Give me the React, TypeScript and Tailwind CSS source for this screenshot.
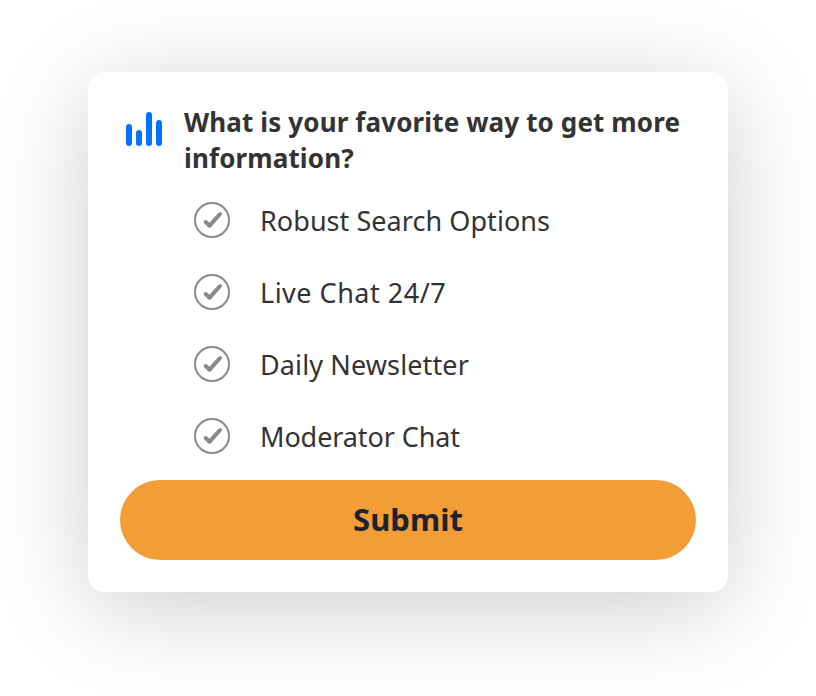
const options = [
  { label: "Robust Search Options", tracking: "tracking-[0.05px]" },
  { label: "Live Chat 24/7", tracking: "tracking-[0.5px]" },
  { label: "Daily Newsletter", tracking: "tracking-[0.12px]" },
  { label: "Moderator Chat", tracking: "tracking-[-0.1px]" },
];

function Check() {
  return (
    <svg className="h-9 w-9 shrink-0" viewBox="0 0 36 36" fill="none">
      <circle cx="18" cy="18" r="17" stroke="#888" strokeWidth="2" />
      <path d="M11.8 20L15.6 23.7L26 12" stroke="#888" strokeWidth="4" strokeLinecap="round" strokeLinejoin="round" />
    </svg>
  );
}

export default function App() {
  return (
    <main className="flex h-[696px] w-[816px] overflow-hidden bg-white px-[88px] pt-[72px] font-['Noto_Sans',sans-serif] text-[#333]">
      <section className="flex h-[520px] w-[640px] flex-col rounded-2xl bg-white px-8 pt-8 shadow-[0_16px_100px_rgba(0,0,0,0.2)]">
        <div className="flex h-[80px]">
          <svg className="ml-1.5 mt-2 h-[34px] w-9 shrink-0" viewBox="0 0 36 34" fill="#0073ff">
            <rect y="12" width="6" height="22" rx="3" />
            <rect x="10" y="18" width="6" height="16" rx="3" />
            <rect x="20" width="6" height="34" rx="3" />
            <rect x="30" y="8" width="6" height="26" rx="3" />
          </svg>
          <h1 className="ml-[22px] text-[26px] leading-9 font-bold tracking-[0.13px]">
            <span className="block whitespace-nowrap">What is your favorite way to get more</span>
            <span className="block whitespace-nowrap">information?</span>
          </h1>
        </div>
        <ul className="h-[288px]">
          {options.map(({ label, tracking }) => (
            <li key={label} className="flex h-[72px] items-center gap-[30px] pl-[74px]">
              <Check />
              <span className={`pt-0.5 text-[27px] leading-9 whitespace-nowrap ${tracking}`}>{label}</span>
            </li>
          ))}
        </ul>
        <button className="mt-2 h-20 w-full rounded-full bg-[#f39d37] pb-0.5 text-[31px] font-bold text-[#1d232c]">Submit</button>
      </section>
    </main>
  );
}
